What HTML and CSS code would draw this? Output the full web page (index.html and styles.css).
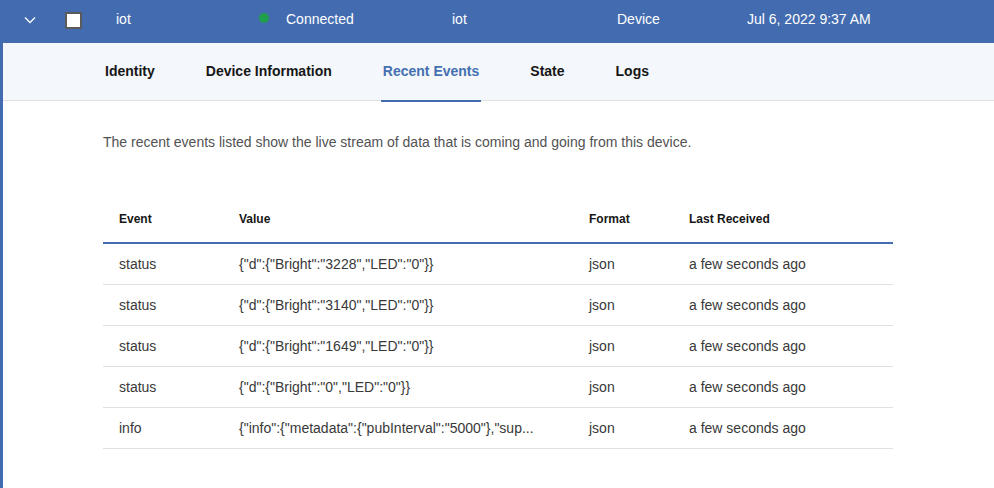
FILE: index.html
```html
<!DOCTYPE html>
<html>
<head>
<meta charset="utf-8">
<link rel="stylesheet" href="styles.css">
</head>
<body>
<div class="row-head">
  <div class="cell chev"><svg width="12" height="8" viewBox="0 0 12 8"><path d="M1 1.5 L6 6.5 L11 1.5" fill="none" stroke="#fff" stroke-width="1.3"/></svg></div>
  <div class="cell chk"><span class="box"></span></div>
  <div class="cell c-name">iot</div>
  <div class="cell c-status"><span class="dot"></span>Connected</div>
  <div class="cell c-type">iot</div>
  <div class="cell c-class">Device</div>
  <div class="cell c-date">Jul 6, 2022 9:37 AM</div>
</div>
<div class="expanded">
  <nav class="tabs">
    <a class="tab">Identity</a>
    <a class="tab">Device Information</a>
    <a class="tab active">Recent Events</a>
    <a class="tab">State</a>
    <a class="tab">Logs</a>
  </nav>
  <div class="content">
    <p class="desc">The recent events listed show the live stream of data that is coming and going from this device.</p>
    <table class="events">
      <colgroup>
        <col class="w-ev"><col class="w-val"><col class="w-fmt"><col class="w-last">
      </colgroup>
      <thead>
        <tr><th>Event</th><th>Value</th><th>Format</th><th>Last Received</th></tr>
      </thead>
      <tbody>
        <tr><td>status</td><td>{"d":{"Bright":"3228","LED":"0"}}</td><td>json</td><td>a few seconds ago</td></tr>
        <tr><td>status</td><td>{"d":{"Bright":"3140","LED":"0"}}</td><td>json</td><td>a few seconds ago</td></tr>
        <tr><td>status</td><td>{"d":{"Bright":"1649","LED":"0"}}</td><td>json</td><td>a few seconds ago</td></tr>
        <tr><td>status</td><td>{"d":{"Bright":"0","LED":"0"}}</td><td>json</td><td>a few seconds ago</td></tr>
        <tr><td>info</td><td>{"info":{"metadata":{"pubInterval":"5000"},"sup...</td><td>json</td><td>a few seconds ago</td></tr>
      </tbody>
    </table>
  </div>
</div>
</body>
</html>
```
FILE: styles.css
```css
* { box-sizing: border-box; }
html, body { margin: 0; padding: 0; background: #fff; }
body {
  font-family: "Liberation Sans", Arial, sans-serif;
  font-size: 14px;
  color: #161616;
  width: 994px;
  height: 488px;
  overflow: hidden;
}
.row-head {
  height: 43px;
  background: #436cb0;
  color: #fff;
  display: flex;
  align-items: center;
}
.cell { display: flex; align-items: center; }
.chev { width: 65px; padding-left: 24px; padding-bottom: 4px; }
.chk { width: 51px; padding-bottom: 3px; }
.box {
  display: block;
  width: 17px;
  height: 17px;
  background: #fff;
  border: 2px solid #5a5a5a;
  border-radius: 1px;
}
.c-name { width: 143px; padding-bottom: 6px; }
.c-status { width: 193px; padding-bottom: 6px; }
.dot {
  width: 10px; height: 10px; border-radius: 50%;
  background: #1f9e4c;
  margin-right: 17px;
  margin-bottom: 1px;
}
.c-type { width: 165px; padding-bottom: 6px; }
.c-class { width: 130px; padding-bottom: 6px; }
.c-date { padding-bottom: 6px; }

.expanded {
  border-left: 3px solid #436cb0;
  height: 445px;
}
.tabs {
  height: 58px;
  background: #f4f7fb;
  border-bottom: 1px solid #e0e0e0;
  display: flex;
  padding-left: 100px;
}
.tab {
  font-weight: bold;
  font-size: 14px;
  color: #161616;
  padding: 0 2px 2px;
  margin-right: 47px;
  display: flex;
  align-items: center;
  position: relative;
  height: 57px;
}
.tab.active { color: #4470b0; }
.tab.active::after {
  content: "";
  position: absolute;
  left: 0; right: 0; bottom: -2px;
  height: 2px;
  background: #436cb0;
}
.content { padding-left: 100px; }
.desc {
  margin: 0;
  padding-top: 32px;
  color: #525252;
  font-size: 14px;
  line-height: 18px;
}
.events {
  margin-top: 49px;
  border-collapse: collapse;
  width: 790px;
  table-layout: fixed;
}
.w-ev { width: 136px; }
.w-val { width: 334px; }
.w-fmt { width: 100px; }
.w-last { width: 220px; }
.events th {
  text-align: left;
  font-size: 12px;
  font-weight: bold;
  color: #161616;
  height: 43px;
  padding: 0 16px 5px;
  border-bottom: 2px solid #436cb0;
}
.events td {
  height: 41px;
  padding: 0 16px;
  color: #393939;
  border-bottom: 1px solid #e0e0e0;
  white-space: nowrap;
}
.events td:nth-child(2), .events th:nth-child(2) { padding-left: 0; }
```
